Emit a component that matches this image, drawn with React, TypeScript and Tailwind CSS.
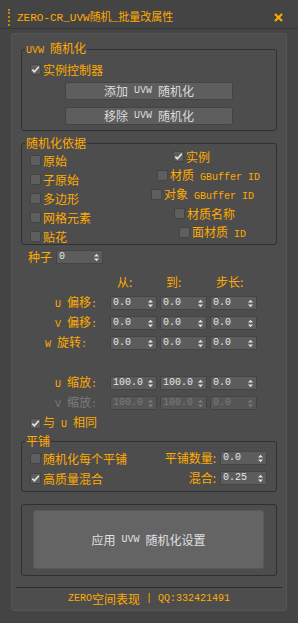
import type { ReactNode } from 'react'

// ascii runs get the narrow mono face, CJK stays 12px
function Mix({ text, latin = 'text-[10px]' }: { text: string; latin?: string }) {
  const parts = text.split(/([\x20-\x7e]+)/).filter(Boolean)
  return (
    <>
      {parts.map((p, i) =>
        /^[\x20-\x7e]+$/.test(p) ? (
          <span key={i} className={`whitespace-pre font-['Liberation_Mono',monospace] ${latin}`}>{p}</span>
        ) : (
          <span key={i}>{p}</span>
        ),
      )}
    </>
  )
}

function Check({ on }: { on?: boolean }) {
  return (
    <span className="flex h-[11px] w-[11px] shrink-0 items-center justify-center rounded-[1px] border border-[#444] bg-[#5e5e5e]">
      {on && (
        <svg width="9" height="9" viewBox="0 0 9 9">
          <path d="M1.3 4.6 L3.4 6.8 L7.8 1.8" stroke="#e4e4e4" strokeWidth="1.7" fill="none" />
        </svg>
      )}
    </span>
  )
}

function CheckRow({ label, on, className = '' }: { label: string; on?: boolean; className?: string }) {
  return (
    <div className={`flex h-[11px] items-center gap-[2px] whitespace-nowrap leading-[11px] text-[#ffab00] ${className}`}>
      <Check on={on} />
      <span>
        <Mix text={label} />
      </span>
    </div>
  )
}

function Spin({ value, dim }: { value: string; dim?: boolean }) {
  const tone = dim ? '#7c7c7c' : '#e2e2e2'
  return (
    <div
      className={`flex h-[14px] w-[47px] shrink-0 items-center justify-between rounded-[1px] border border-[#444] pl-[2px] pr-[3px] font-['Liberation_Mono',monospace] text-[10px] leading-[12px] ${
        dim ? 'bg-[#565656] text-[#7c7c7c]' : 'bg-[#5c5c5c] text-[#e6e6e6]'
      }`}
    >
      <span>{value}</span>
      <svg width="5" height="9" viewBox="0 0 5 9">
        <path d="M0 3.6 L2.5 0.8 L5 3.6 Z" fill={tone} />
        <path d="M0 5.4 L2.5 8.2 L5 5.4 Z" fill={tone} />
      </svg>
    </div>
  )
}

function Group({ title, children, className = '' }: { title: string; children: ReactNode; className?: string }) {
  return (
    <fieldset className={`rounded-[3px] border border-[#303030] ${className}`}>
      <legend className="ml-[3px] px-[1px] leading-[14px] text-[#ffab00]">
        <Mix text={title} />
      </legend>
      {children}
    </fieldset>
  )
}

function SpinRow({ label, values, dim, pad = 'pr-[13px]', className = '' }: { label: string; values: string[]; dim?: boolean; pad?: string; className?: string }) {
  return (
    <div className={`flex h-[14px] items-center ${className}`}>
      <div className={`w-[89px] whitespace-nowrap text-right leading-[14px] ${pad} ${dim ? 'text-[#7c7c7c]' : 'text-[#ffab00]'}`}>
        <Mix text={label} />
      </div>
      <div className="flex gap-[3px]">
        {values.map((v, i) => (
          <Spin key={i} value={v} dim={dim} />
        ))}
      </div>
    </div>
  )
}

export default function App() {
  return (
    <div className="h-[623px] w-[298px] overflow-hidden bg-[#444444] font-['Noto_Sans_CJK_SC',sans-serif] text-[12px] leading-[14px]">
      <div className="flex h-[29px] items-center border-b border-[#363636] pt-[6px]">
        <span className="ml-[8px] h-[17px] border-l-2 border-dotted border-[#c98a00]" />
        <span className="ml-[7px] text-[11px] text-[#ffab00]">
          <Mix text="ZERO-CR_UVW随机_批量改属性" latin="text-[11px]" />
        </span>
        <svg className="ml-auto mr-[15px]" width="9" height="9" viewBox="0 0 9 9">
          <path d="M1 1 L8 8 M8 1 L1 8" stroke="#ffab00" strokeWidth="2.2" />
        </svg>
      </div>

      <div className="mx-[11px] mt-[4px] h-[578px] rounded-[3px] border border-[#555] bg-[#4d4d4d] px-[9px] pt-[7px]">
        <Group title="UVW 随机化" className="pb-[5px]">
          <div className="mt-[4px] flex h-[14px] items-center pl-[8px]">
            <CheckRow label="实例控制器" on />
          </div>
          <button className="ml-[43px] mt-[6px] flex h-[18px] w-[168px] items-center justify-center rounded-[2px] border border-[#444] bg-[#5e5e5e] text-[#dcdcdc]">
            <Mix text="添加 UVW 随机化" />
          </button>
          <button className="ml-[43px] mt-[7px] flex h-[18px] w-[168px] items-center justify-center rounded-[2px] border border-[#444] bg-[#5e5e5e] text-[#dcdcdc]">
            <Mix text="移除 UVW 随机化" />
          </button>
        </Group>

        <Group title="随机化依据" className="mt-[5px] pb-[2px]">
          <div className="flex">
            <div className="flex w-[120px] flex-col gap-[8px] pl-[8px] pt-[5px]">
              <CheckRow label="原始" />
              <CheckRow label="子原始" />
              <CheckRow label="多边形" />
              <CheckRow label="网格元素" />
              <CheckRow label="贴花" />
            </div>
            <div className="flex flex-col gap-[8px] pt-[1px]">
              <CheckRow label="实例" on className="ml-[31px]" />
              <CheckRow label="材质 GBuffer ID" className="ml-[15px]" />
              <CheckRow label="对象 GBuffer ID" className="ml-[9px]" />
              <CheckRow label="材质名称" className="ml-[32px]" />
              <CheckRow label="面材质 ID" className="ml-[37px]" />
            </div>
          </div>
        </Group>

        <div className="mt-[5px] flex h-[14px] items-center gap-[4px] pl-[7px]">
          <span className="text-[#ffab00]">种子</span>
          <Spin value="0" />
        </div>

        <div className="mt-[11px] flex h-[14px] items-center pl-[89px] text-[#ffab00]">
          <span className="w-[50px] pl-[7px]">从:</span>
          <span className="w-[50px] pl-[6px]">到:</span>
          <span className="w-[50px] pl-[6px]">步长:</span>
        </div>

        <SpinRow label="U 偏移:" values={['0.0', '0.0', '0.0']} className="mt-[7px]" />
        <SpinRow label="V 偏移:" values={['0.0', '0.0', '0.0']} className="mt-[6px]" />
        <SpinRow label="W 旋转:" values={['0.0', '0.0', '0.0']} pad="pr-[23px]" className="mt-[6px]" />
        <SpinRow label="U 缩放:" values={['100.0', '100.0', '0.0']} className="mt-[26px]" />
        <SpinRow label="V 缩放:" values={['100.0', '100.0', '0.0']} dim className="mt-[6px]" />

        <div className="mt-[6px] flex h-[14px] items-center pl-[9px]">
          <CheckRow label="与 U 相同" on />
        </div>

        <Group title="平铺" className="mt-[4px] pb-[6px]">
          <div className="mt-[3px] flex h-[14px] items-center justify-between pl-[8px] pr-[9px]">
            <CheckRow label="随机化每个平铺" />
            <div className="flex items-center gap-[4px] text-[#ffab00]">
              <span>平铺数量:</span>
              <Spin value="0.0" />
            </div>
          </div>
          <div className="mt-[6px] flex h-[14px] items-center justify-between pl-[8px] pr-[9px]">
            <CheckRow label="高质量混合" on />
            <div className="flex items-center gap-[4px] text-[#ffab00]">
              <span>混合:</span>
              <Spin value="0.25" />
            </div>
          </div>
        </Group>

        <div className="mt-[12px] rounded-[3px] border border-[#303030] pb-[6px] pl-[11px] pr-[12px] pt-[5px]">
          <button className="flex h-[59px] w-full items-center justify-center rounded-[3px] border border-[#585858] bg-[#646464] text-[#e0e0e0]">
            <Mix text="应用 UVW 随机化设置" />
          </button>
        </div>

        <div className="-mx-[5px] mt-[11px] h-px bg-[#2c2c2c]" />
        <div className="mt-[4px] flex h-[14px] items-center justify-center whitespace-pre text-[#ffab00]">
          <Mix text="ZERO空间表现 | QQ:332421491" />
        </div>
      </div>
    </div>
  )
}
